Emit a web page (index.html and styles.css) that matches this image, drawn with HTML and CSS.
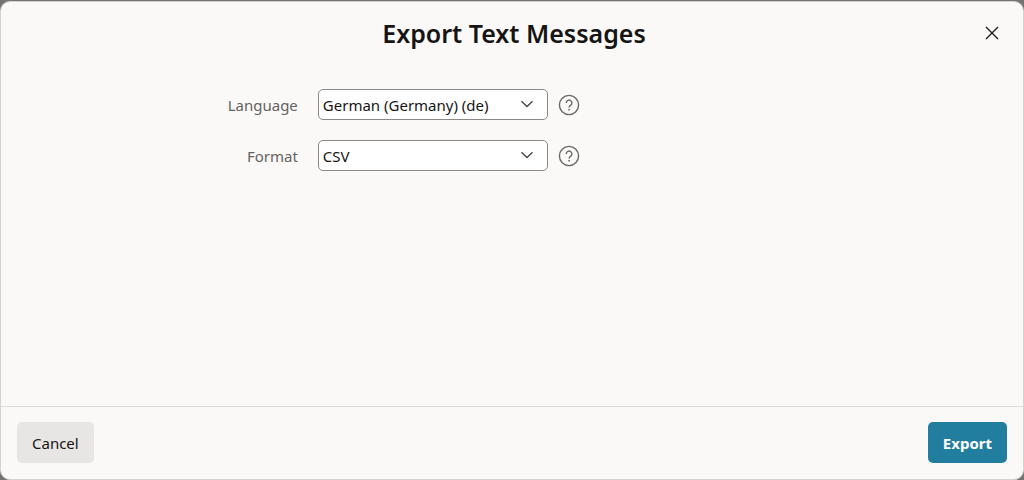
FILE: index.html
```html
<!DOCTYPE html>
<html lang="en">
<head>
  <meta charset="utf-8">
  <title>Export Text Messages</title>
  <link rel="stylesheet" href="styles.css">
</head>
<body>
<div class="dialog" role="dialog" aria-labelledby="dialog-title">
  <header class="dialog-header">
    <h1 id="dialog-title">Export Text Messages</h1>
    <button type="button" class="close" aria-label="Close">
      <svg width="14" height="14" viewBox="0 0 14 14"><path d="M1 1l12 12M13 1L1 13"/></svg>
    </button>
  </header>
  <form class="dialog-body" id="export-form">
    <div class="field">
      <label for="language">Language</label>
      <div class="select-wrap">
        <select id="language">
          <option>German (Germany) (de)</option>
        </select>
        <svg class="chevron" width="14" height="8" viewBox="0 0 14 8"><path d="M1.5 1.2L7 6.6l5.500-5.400"/></svg>
      </div>
      <button type="button" class="help" aria-label="Help for Language">
        <svg width="22" height="22" viewBox="0 0 22 22"><circle cx="11" cy="11" r="9.600"/><path d="M8.300 8.900a2.800 2.800 0 1 1 4.500 2.200c-1.100.8-1.700 1.200-1.700 2.400"/><circle class="dot" cx="11.100" cy="15.700" r="0.900"/></svg>
      </button>
    </div>
    <div class="field">
      <label for="format">Format</label>
      <div class="select-wrap">
        <select id="format">
          <option>CSV</option>
        </select>
        <svg class="chevron" width="14" height="8" viewBox="0 0 14 8"><path d="M1.5 1.2L7 6.6l5.500-5.400"/></svg>
      </div>
      <button type="button" class="help" aria-label="Help for Format">
        <svg width="22" height="22" viewBox="0 0 22 22"><circle cx="11" cy="11" r="9.600"/><path d="M8.300 8.900a2.800 2.800 0 1 1 4.500 2.200c-1.100.8-1.700 1.200-1.700 2.400"/><circle class="dot" cx="11.100" cy="15.700" r="0.900"/></svg>
      </button>
    </div>
  </form>
  <footer class="dialog-footer">
    <button type="button" class="btn">Cancel</button>
    <button type="submit" form="export-form" class="btn btn-primary">Export</button>
  </footer>
</div>
</body>
</html>
```

FILE: styles.css
```css
* {
  box-sizing: border-box;
}
body {
  margin: 0;
  background-color: #757372;
  color: #161513;
  font-family: "Noto Sans", sans-serif;
  font-size: 15px;
}
button,
select {
  font: inherit;
  color: inherit;
}
button {
  border: none;
  padding: 0;
  cursor: pointer;
}
svg {
  display: block;
  fill: none;
  stroke: #4a4745;
}
.dialog {
  display: flex;
  flex-direction: column;
  min-height: calc(100vh - 1px);
  margin-top: 1px;
  background-color: #fbf9f8;
  border: 1px solid #d4d2d0;
  border-radius: 10px;
}

/* header */
.dialog-header {
  display: grid;
  grid-template-columns: 44px 1fr 40px;
  align-items: center;
  padding: 11px;
}
h1 {
  grid-column: 2;
  margin: 0;
  font-size: 25px;
  line-height: 40px;
  font-weight: 600;
  text-align: center;
}
.close {
  display: flex;
  align-items: center;
  justify-content: center;
  height: 40px;
  background: none;
}
.close svg {
  stroke: #201e1c;
  stroke-width: 1.4;
}

/* form */
.dialog-body {
  flex: 1;
  display: flex;
  flex-direction: column;
  gap: 20px;
  padding: 25px 0;
}
.field {
  display: grid;
  grid-template-columns: 31% 230px 32px;
  align-items: center;
}
.field label {
  padding-right: 20px;
  color: #65625f;
  text-align: right;
}
.field .help {
  margin-left: 10px;
}
.select-wrap {
  position: relative;
}
select {
  display: block;
  width: 100%;
  height: 31px;
  padding: 0 36px 0 4px;
  appearance: none;
  background-color: #fff;
  border: 1px solid #8b8886;
  border-radius: 5px;
}
.chevron {
  position: absolute;
  top: 11px;
  right: 14px;
  stroke-width: 1.4;
  pointer-events: none;
}
.help {
  background: none;
}
.help svg {
  stroke: #6b6866;
  stroke-width: 1.4;
}
.help .dot {
  fill: #6b6866;
  stroke: none;
}

/* footer */
.dialog-footer {
  display: flex;
  justify-content: space-between;
  padding: 15px 16px 16px;
  border-top: 1px solid #dddbd9;
}
.btn {
  height: 41px;
  padding: 0 15px;
  background-color: #e8e6e4;
  border-radius: 5px;
}
.btn-primary {
  background-color: #227e9e;
  color: #fff;
  font-weight: 700;
}
```
